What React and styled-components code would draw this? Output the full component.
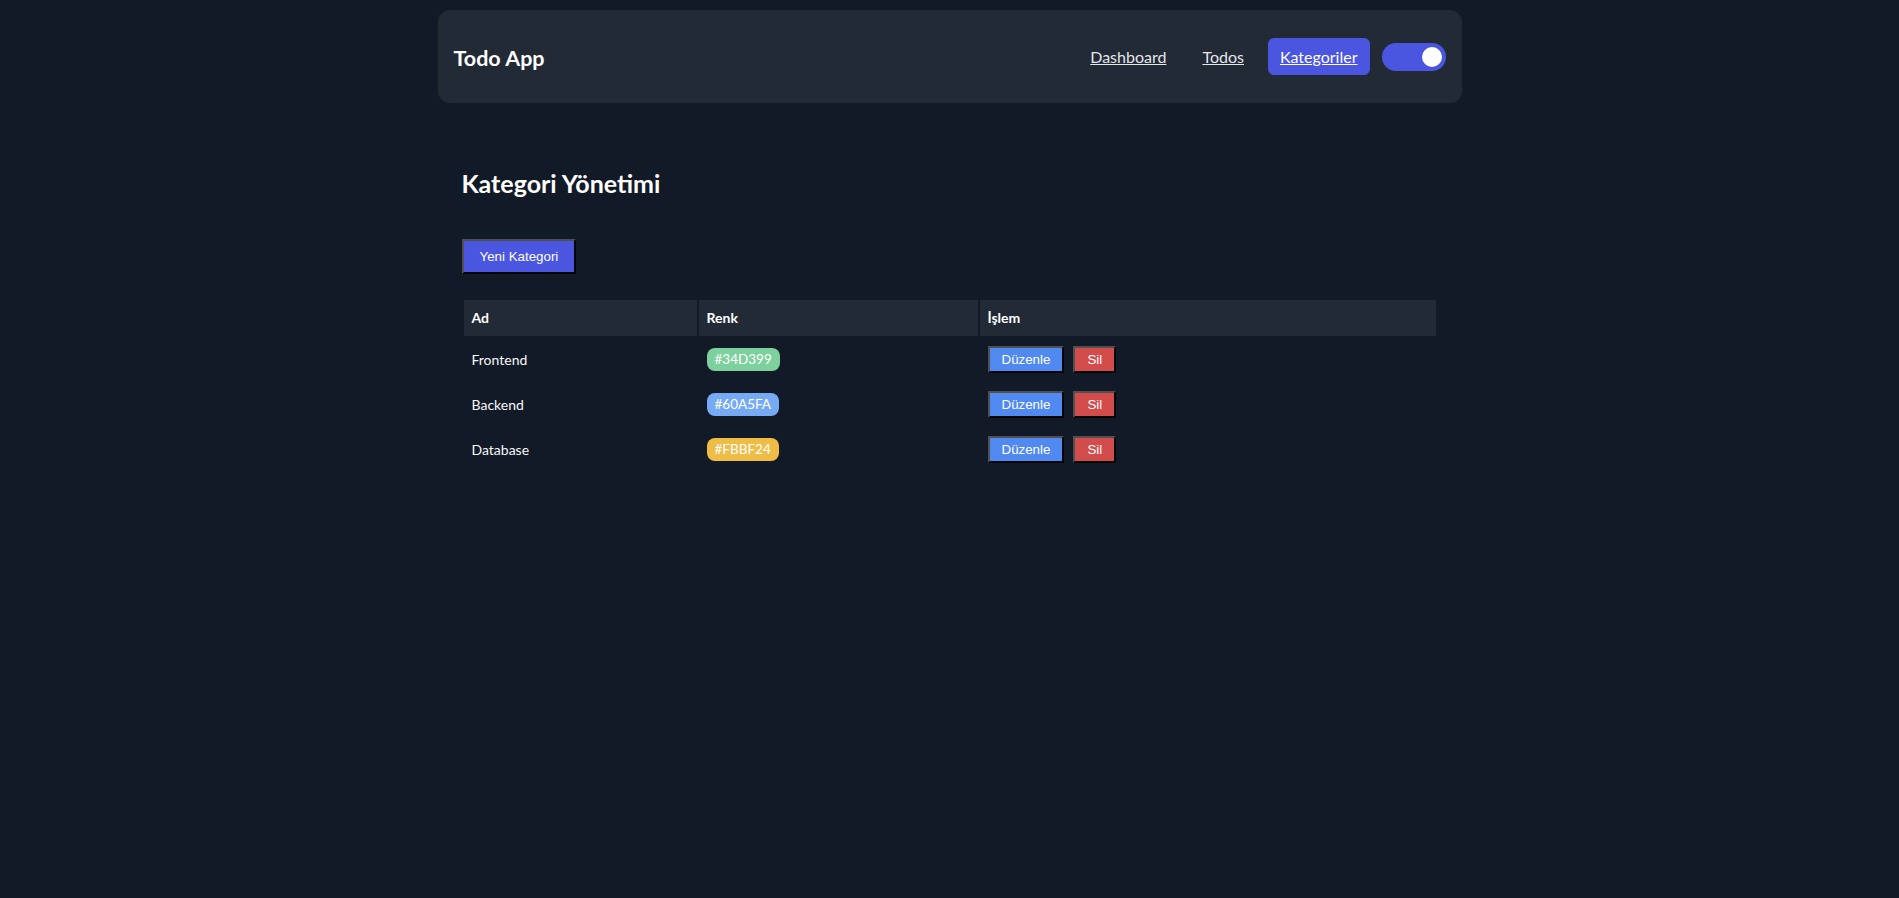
import React from 'react'
import styled, { createGlobalStyle } from 'styled-components'

const GlobalStyle = createGlobalStyle`
  html, body {
    margin: 0;
    background: #131a27;
    color: #f3f4f6;
    font-family: Lato, "Noto Sans", sans-serif;
  }
`;

const categories = [
  { id: 1, name: 'Frontend', color: '#34D399', tint: '#7dd19e' },
  { id: 2, name: 'Backend', color: '#60A5FA', tint: '#76aaf4' },
  { id: 3, name: 'Database', color: '#FBBF24', tint: '#efbd45' },
];

export default function App() {
  return (
    <>
      <GlobalStyle />
      <Header>
        <Brand>Todo App</Brand>
        <Nav>
          <NavLink href="#">Dashboard</NavLink>
          <NavLink href="#">Todos</NavLink>
          <NavLink href="#" $active>Kategoriler</NavLink>
          <Toggle aria-label="theme">
            <Knob />
          </Toggle>
        </Nav>
      </Header>

      <Main>
        <Title>Kategori Yönetimi</Title>
        <Button $bg="#4a55e0" $size="big">Yeni Kategori</Button>

        <Table>
          <thead>
            <tr>
              <HeadCell $w="233px">Ad</HeadCell>
              <HeadCell $w="279px">Renk</HeadCell>
              <HeadCell>İşlem</HeadCell>
            </tr>
          </thead>
          <tbody>
            {categories.map(c => (
              <tr key={c.id}>
                <Cell>{c.name}</Cell>
                <Cell>
                  <Badge $bg={c.tint}>{c.color}</Badge>
                </Cell>
                <Cell>
                  <Actions>
                    <Button $bg="#5089ef">Düzenle</Button>
                    <Button $bg="#d24c4b">Sil</Button>
                  </Actions>
                </Cell>
              </tr>
            ))}
          </tbody>
        </Table>
      </Main>
    </>
  )
}

const Header = styled.header`
  max-width: 1024px;
  box-sizing: border-box;
  margin: 10px auto 0;
  padding: 28px 16px;
  background: #222a36;
  border-radius: 12px;
  display: flex;
  align-items: center;
  justify-content: space-between;
`;

const Brand = styled.div`
  font-size: 21.5px;
  font-weight: 700;
  color: #ffffff;
  line-height: 24px;
  padding-top: 3px;
`;

const Nav = styled.nav`
  display: flex;
  align-items: center;
  gap: 12px;
`;

const NavLink = styled.a`
  font-size: 16px;
  line-height: 21px;
  padding: 8px 12px;
  border-radius: 6px;
  color: ${p => (p.$active ? '#ffffff' : '#e5e7eb')};
  background: ${p => (p.$active ? '#4a55e0' : 'transparent')};
  text-decoration: underline;
`;

const Toggle = styled.div`
  width: 64px;
  height: 28px;
  box-sizing: border-box;
  padding: 0 4px;
  border-radius: 14px;
  background: #4a55e0;
  display: flex;
  align-items: center;
  justify-content: flex-end;
`;

const Knob = styled.span`
  width: 20px;
  height: 20px;
  border-radius: 50%;
  background: #ffffff;
`;

const Main = styled.main`
  max-width: 1024px;
  box-sizing: border-box;
  margin: 0 auto;
  padding: 66px 24px 24px;
`;

const Title = styled.h2`
  margin: 0 0 41px;
  font-size: 25px;
  line-height: 29px;
  font-weight: 700;
  color: #ffffff;
`;

const Button = styled.button`
  font-family: "Liberation Sans", Arial, sans-serif;
  font-size: 13.333px;
  line-height: 15px;
  color: #ffffff;
  background: ${p => p.$bg};
  border-width: 2px;
  border-style: solid;
  border-color: #505050 #050505 #050505 #505050;
  padding: ${p => (p.$size === 'big' ? '8px 16px' : '4px 12px')};
  margin: 0;
  cursor: pointer;
`;

const Table = styled.table`
  width: 100%;
  margin-top: 24px;
  border-spacing: 2px;
  table-layout: fixed;
`;

const HeadCell = styled.th`
  width: ${p => p.$w || 'auto'};
  box-sizing: border-box;
  background: #222a36;
  text-align: left;
  padding: 8px;
  font-size: 14px;
  line-height: 20px;
  font-weight: 700;
  color: #ffffff;
`;

const Cell = styled.td`
  padding: 8px;
  font-size: 14px;
  color: #f6f7f9;
  vertical-align: middle;
`;

const Badge = styled.span`
  display: inline-block;
  padding: 2px 8px;
  border-radius: 8px;
  font-size: 13.5px;
  line-height: 19px;
  color: #ffffff;
  background: ${p => p.$bg};
`;

const Actions = styled.div`
  display: flex;
  align-items: center;
  gap: 9px;
`;
